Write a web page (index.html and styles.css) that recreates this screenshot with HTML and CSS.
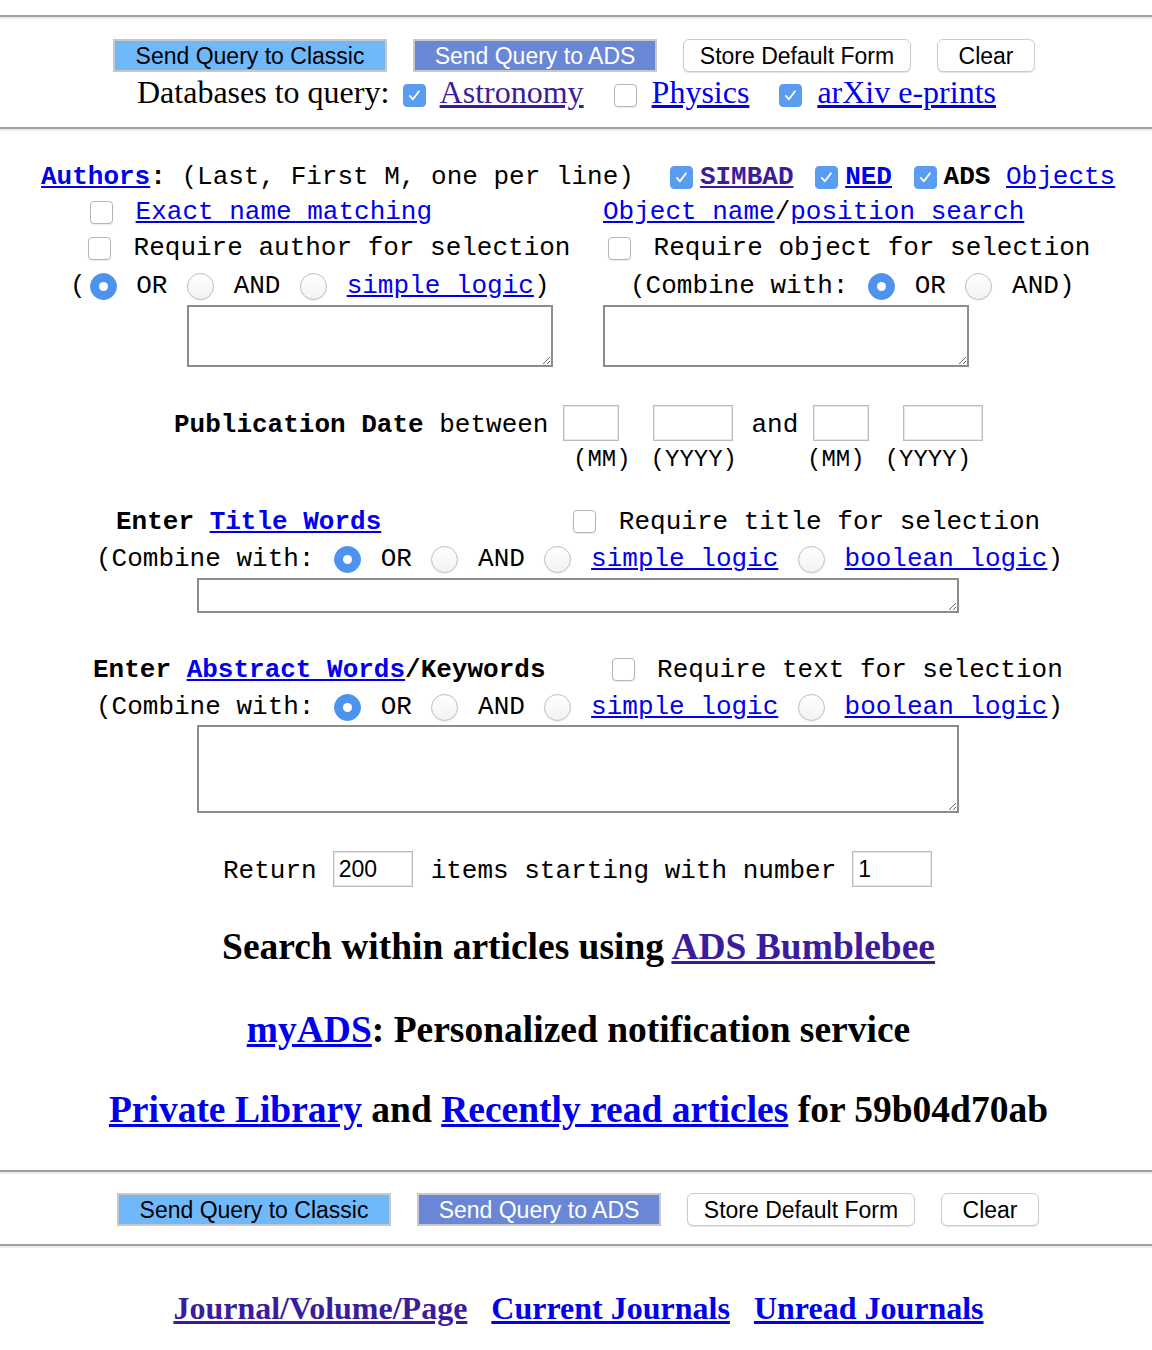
FILE: index.html
```html
<!DOCTYPE html>
<html>
<head>
<meta charset="utf-8">
<title>ADS Abstract Service</title>
<link rel="stylesheet" href="styles.css">
</head>
<body>
<hr class="rule rule-1">
<div class="btnrow btnrow-top">
  <button class="btn btn-classic">Send Query to Classic</button>
  <button class="btn btn-ads">Send Query to ADS</button>
  <button class="btn btn-plain btn-store">Store Default Form</button>
  <button class="btn btn-plain btn-clear">Clear</button>
</div>
<div class="dbrow">Databases to query: <span class="cb on"><svg viewBox="0 0 21 21"><path d="M5.8 10.9l3.1 3.4 6.1-8.1"/></svg></span> <a class="vis" href="#">Astronomy</a>&nbsp;&nbsp; <span class="cb"></span> <a href="#">Physics</a>&nbsp;&nbsp; <span class="cb on"><svg viewBox="0 0 21 21"><path d="M5.8 10.9l3.1 3.4 6.1-8.1"/></svg></span> <a href="#">arXiv e-prints</a></div>
<hr class="rule rule-2">

<div class="line a1"><a class="b" href="#">Authors</a><b>:</b> (Last, First M, one per line)<span class="objs"><span class="cb on"><svg viewBox="0 0 21 21"><path d="M5.8 10.9l3.1 3.4 6.1-8.1"/></svg></span><a class="b vis" href="#">SIMBAD</a> <span class="cb on"><svg viewBox="0 0 21 21"><path d="M5.8 10.9l3.1 3.4 6.1-8.1"/></svg></span><a class="b" href="#">NED</a> <span class="cb on"><svg viewBox="0 0 21 21"><path d="M5.8 10.9l3.1 3.4 6.1-8.1"/></svg></span><b>ADS</b> <a href="#">Objects</a></span></div>
<div class="pair a2">
  <div class="l"><span class="cb"></span> <a href="#">Exact name matching</a></div>
  <div class="r"><a href="#">Object name</a>/<a href="#">position search</a></div>
</div>
<div class="pair a3">
  <div class="l"><span class="cb"></span> Require author for selection</div>
  <div class="r"><span class="cb"></span> Require object for selection</div>
</div>
<div class="pair a4">
  <div class="l">(<span class="rd on"></span> OR <span class="rd"></span> AND <span class="rd"></span> <a href="#">simple logic</a>)</div>
  <div class="r">(Combine with: <span class="rd on"></span> OR <span class="rd"></span> AND)</div>
</div>
<div class="pair a5">
  <div class="l"><textarea class="ta ta-small"></textarea></div>
  <div class="r"><textarea class="ta ta-small"></textarea></div>
</div>

<div class="pub">
  <span><b>Publication Date</b> between</span>
  <input class="tx mm" type="text">
  <input class="tx yy yy-gap" type="text">
  <span class="and">and</span>
  <input class="tx mm" type="text">
  <input class="tx yy yy-gap" type="text">
</div>
<div class="dlabels">
  <span>(MM)</span>
  <span class="dl-yy">(YYYY)</span>
  <span class="dl-mm2">(MM)</span>
  <span class="dl-yy">(YYYY)</span>
</div>

<div class="row2 t1">
  <span class="t1l"><b>Enter</b> <a class="b" href="#">Title Words</a></span>
  <span class="t1r"><span class="cb"></span> Require title for selection</span>
</div>
<div class="line t2">(Combine with: <span class="rd on"></span> OR <span class="rd"></span> AND <span class="rd"></span> <a href="#">simple logic</a> <span class="rd"></span> <a href="#">boolean logic</a>)</div>
<div class="tawrap t3"><textarea class="ta ta-title"></textarea></div>

<div class="row2 k1">
  <span class="k1l"><b>Enter</b> <a class="b" href="#">Abstract Words</a><b>/Keywords</b></span>
  <span class="k1r"><span class="cb"></span> Require text for selection</span>
</div>
<div class="line k2">(Combine with: <span class="rd on"></span> OR <span class="rd"></span> AND <span class="rd"></span> <a href="#">simple logic</a> <span class="rd"></span> <a href="#">boolean logic</a>)</div>
<div class="tawrap"><textarea class="ta ta-abs"></textarea></div>

<div class="ret">
  <span>Return</span>
  <input class="tx num" type="text" value="200">
  <span class="ret-mid">items starting with number</span>
  <input class="tx num" type="text" value="1">
</div>

<div class="big big1">Search within articles using <a class="vis" href="#">ADS Bumblebee</a></div>
<div class="big big2"><a href="#">myADS</a>: Personalized notification service</div>
<div class="big big3"><a href="#">Private Library</a> and <a href="#">Recently read articles</a> for 59b04d70ab</div>

<hr class="rule rule-3">
<div class="btnrow btnrow-bot">
  <button class="btn btn-classic">Send Query to Classic</button>
  <button class="btn btn-ads">Send Query to ADS</button>
  <button class="btn btn-plain btn-store">Store Default Form</button>
  <button class="btn btn-plain btn-clear">Clear</button>
</div>
<hr class="rule rule-4">

<div class="foot"><a class="vis" href="#">Journal/Volume/Page</a>&nbsp;&nbsp; <a href="#">Current Journals</a>&nbsp;&nbsp; <a href="#">Unread Journals</a></div>
</body>
</html>
```

FILE: styles.css
```css
* { box-sizing: border-box; }

body {
  margin: 0;
  width: 1152px;
  background: #fff;
  color: #000;
  font-family: "Liberation Mono", "Courier New", monospace;
  font-size: 26px;
}

a { color: #0000ee; text-decoration: underline; }
a.vis { color: #3b1c9c; }
.b { font-weight: bold; }

/* horizontal rules */
.rule {
  height: 0;
  margin: 0;
  border: 0;
  border-top: 2px solid #a0a0a0;
  border-bottom: 2px solid #ececec;
}
.rule-1 { margin-top: 15px; }
.rule-2 { margin-top: 17px; }
.rule-3 { margin-top: 38px; }
.rule-4 { margin-top: 18px; }

/* buttons */
.btnrow { display: flex; gap: 26px; height: 33px; }
.btnrow-top { margin-top: 20px; padding-left: 113px; }
.btnrow-bot { margin-top: 19px; padding-left: 117px; }

.btn {
  height: 33px;
  padding: 1px 0 0;
  font-family: "Liberation Sans", Arial, sans-serif;
  font-size: 23px;
  line-height: 29px;
  color: #000;
  cursor: pointer;
}
.btn-classic { width: 274px; background: #6fb9fa; border: 2px solid #c8c8c8; }
.btn-ads { width: 244px; background: #6a87d6; border: 2px solid #c8c8c8; color: #fff; }
.btn-plain {
  background: #fff;
  border: 1px solid #cdcdcd;
  border-radius: 6px;
  box-shadow: 0 1px 1px rgba(0,0,0,0.12);
}
.btn-store { width: 228px; }
.btn-clear { width: 98px; }

/* database line */
.dbrow {
  margin-top: 2px;
  height: 36px;
  line-height: 36px;
  padding-left: 137px;
  font-family: "Liberation Serif", "Times New Roman", serif;
  font-size: 32px;
  white-space: nowrap;
}

/* checkboxes and radios */
.cb {
  display: inline-block;
  width: 23px;
  height: 23px;
  margin: 0 7px 0 6px;
  vertical-align: middle;
  border: 1px solid #b5b5b5;
  border-radius: 4px;
  background: #fff;
  box-shadow: 0 1px 1px rgba(0,0,0,0.08);
  line-height: 0;
}
.cb.on { background: #5a9cf0; border-color: #5a9cf0; box-shadow: none; }
.cb svg { display: block; width: 21px; height: 21px; }
.cb svg path {
  fill: none;
  stroke: #fff;
  stroke-width: 1.8;
  stroke-linecap: round;
  stroke-linejoin: round;
}

.rd {
  display: inline-flex;
  align-items: center;
  justify-content: center;
  width: 27px;
  height: 27px;
  margin: 0 4px;
  vertical-align: middle;
  border-radius: 50%;
  border: 1px solid #bdbdbd;
  background: linear-gradient(#ffffff, #f2f2f2);
  box-shadow: 0 1px 1px rgba(0,0,0,0.06);
}
.rd.on { background: #4e92f0; border-color: #4e92f0; box-shadow: none; }
.rd.on::after {
  content: "";
  width: 9px;
  height: 9px;
  border-radius: 50%;
  background: #fff;
}

/* mono lines */
.line {
  height: 36px;
  line-height: 36px;
  white-space: nowrap;
}
.pair {
  display: grid;
  grid-template-columns: 590px 1fr;
  height: 36px;
  line-height: 36px;
  white-space: nowrap;
}

.a1 { margin-top: 27px; padding-left: 41px; line-height: 38px; }
.objs { margin-left: 30px; }
.a2 .l { padding-left: 84px; }
.a2 .r { padding-left: 13px; }
.a3 .l { padding-left: 82px; }
.a3 .r { padding-left: 12px; }
.a4 { height: 38px; line-height: 40px; }
.a4 .l { padding-left: 70px; }
.a4 .r { padding-left: 40px; }
.a5 { height: auto; margin-top: 1px; line-height: normal; }
.a5 .l { padding-left: 187px; }
.a5 .r { padding-left: 13px; }

.ta {
  display: block;
  border: 2px solid #8c8c8c;
  background: #fff;
  font-family: "Liberation Mono", monospace;
  font-size: 16px;
  margin: 0;
}
.ta-small { width: 366px; height: 62px; }
.tawrap { padding-left: 197px; }
.ta-title { width: 762px; height: 35px; }
.ta-abs { width: 762px; height: 88px; }
.t3 { margin-top: 1px; }

/* text inputs */
.tx {
  height: 36px;
  margin: 0;
  border: 1px solid #bcbcbc;
  box-shadow: inset 0 0 0 1px #e6e6e6;
  background: #fff;
  padding: 0 5px;
  font-family: "Liberation Sans", Arial, sans-serif;
  font-size: 23px;
  color: #000;
}
.mm { width: 56px; margin-left: 15px; }
.yy { width: 80px; }
.yy-gap { margin-left: 34px; }
.num { width: 80px; margin-left: 16px; }

.pub {
  margin-top: 38px;
  display: flex;
  align-items: center;
  height: 36px;
  padding-left: 174px;
  white-space: nowrap;
}
.pub > span { padding-top: 3px; }
.and { margin-left: 18px; }

.dlabels {
  margin-top: 6px;
  display: flex;
  height: 24px;
  line-height: 26px;
  font-size: 24px;
  padding-left: 573px;
  white-space: nowrap;
}
.dl-yy { margin-left: 20px; }
.dl-mm2 { margin-left: 70px; }

.row2 {
  display: flex;
  align-items: center;
  white-space: nowrap;
}
.row2 > span { padding-top: 2px; }
.t1 { margin-top: 31px; height: 37px; }
.t1l { padding-left: 116px; }
.t1r { margin-left: 186px; }
.t2 { height: 38px; line-height: 40px; padding-left: 96px; }

.k1 { margin-top: 37px; height: 37px; }
.k1l { padding-left: 93px; }
.k1r { margin-left: 60px; }
.k2 { height: 38px; line-height: 40px; padding-left: 96px; }

.ret {
  margin-top: 38px;
  display: flex;
  align-items: center;
  height: 36px;
  padding-left: 223px;
  white-space: nowrap;
}
.ret > span { padding-top: 3px; }
.ret-mid { margin-left: 18px; }

/* big serif lines */
.big {
  height: 44px;
  line-height: 44px;
  text-align: center;
  padding-left: 5px;
  font-family: "Liberation Serif", "Times New Roman", serif;
  font-weight: bold;
  font-size: 37.5px;
  white-space: nowrap;
}
.big1 { margin-top: 38px; }
.big2 { margin-top: 39px; }
.big3 { margin-top: 36px; }

.foot {
  margin-top: 40px;
  height: 40px;
  line-height: 40px;
  text-align: center;
  padding-left: 5px;
  font-family: "Liberation Serif", "Times New Roman", serif;
  font-weight: bold;
  font-size: 32px;
  white-space: nowrap;
}
```
